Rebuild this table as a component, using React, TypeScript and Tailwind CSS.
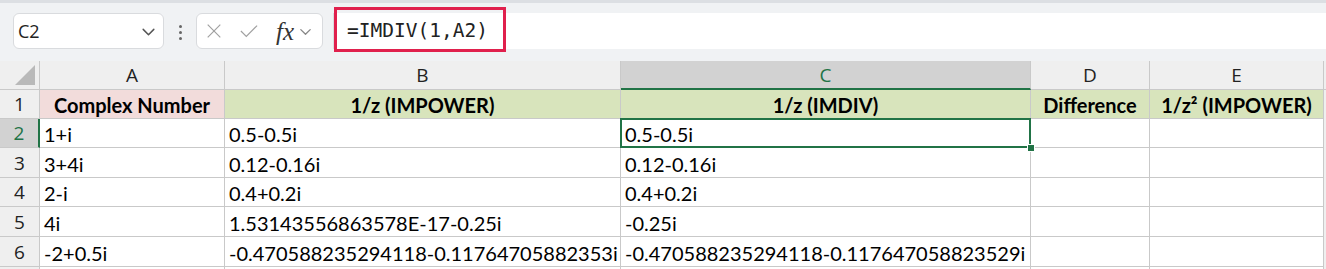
import React from "react";

// Column widths in px: row header, A, B, C, D, E, and the sliver past E
const COLS = "40px 185px 396px 410px 119px 174px 2px";
// Row heights: column header, row 1..6, and the partial row at the bottom
const ROWS = "29px 29px 29px 30px 29px 30px 30px 10px";

const CELL_FONT = "font-['Lato',sans-serif]";
const UI_FONT = "font-['Open_Sans',sans-serif]";

type Row = { n: number; a: string; b: string; c: string };

const rows: Row[] = [
  { n: 2, a: "1+i", b: "0.5-0.5i", c: "0.5-0.5i" },
  { n: 3, a: "3+4i", b: "0.12-0.16i", c: "0.12-0.16i" },
  { n: 4, a: "2-i", b: "0.4+0.2i", c: "0.4+0.2i" },
  { n: 5, a: "4i", b: "1.53143556863578E-17-0.25i", c: "-0.25i" },
  {
    n: 6,
    a: "-2+0.5i",
    b: "-0.470588235294118-0.11764705882353i",
    c: "-0.470588235294118-0.117647058823529i",
  },
];

function Chevron({ className }: { className?: string }) {
  return (
    <svg viewBox="0 0 16 16" className={className} fill="none" stroke="currentColor" strokeWidth="1.4">
      <path d="M3 6l5 5 5-5" strokeLinecap="round" strokeLinejoin="round" />
    </svg>
  );
}

function FormulaBar() {
  return (
    <div className="relative flex h-[61px] items-start bg-[#f0f2f4] border-t-[3px] border-[#dcdfe3]">
      {/* Name box */}
      <div className="ml-[13px] mt-[10px] flex h-[36px] w-[151px] items-center justify-between rounded-[6px] border border-[#d9dbde] bg-white pl-[4px] pr-[6px]">
        <span className={`${UI_FONT} text-[18px] text-[#222]`}>C2</span>
        <Chevron className="h-[17px] w-[17px] text-[#555]" />
      </div>
      {/* Vertical dots */}
      <div className="ml-[13px] mt-[22px] flex w-[6px] flex-col items-center gap-[3px]">
        <div className="h-[3px] w-[3px] rounded-full bg-[#666]" />
        <div className="h-[3px] w-[3px] rounded-full bg-[#666]" />
        <div className="h-[3px] w-[3px] rounded-full bg-[#666]" />
      </div>
      {/* Cancel / enter / fx */}
      <div className="ml-[13px] mt-[10px] flex h-[36px] w-[127px] items-center rounded-[6px] border border-[#d9dbde] bg-white">
        <svg viewBox="0 0 20 20" className="ml-[8px] h-[18px] w-[18px] text-[#a0a0a0]" fill="none" stroke="currentColor" strokeWidth="1.3">
          <path d="M3 3l14 14M17 3L3 17" />
        </svg>
        <svg viewBox="0 0 22 20" className="ml-[15px] h-[18px] w-[22px] text-[#a0a0a0]" fill="none" stroke="currentColor" strokeWidth="1.3">
          <path d="M2 10l6 6L20 4" />
        </svg>
        <span className="ml-[16px] font-['Liberation_Serif',serif] text-[25px] italic leading-none text-[#333]">fx</span>
        <Chevron className="ml-[4px] h-[15px] w-[15px] text-[#888]" />
      </div>
      {/* Formula input */}
      <div className="ml-[10px] mt-[10px] flex h-[36px] flex-1 items-center border-l border-[#d9dbde] bg-white pl-[13px]">
        <span className="font-['DejaVu_Sans_Mono',monospace] text-[19.5px] text-[#222]">=IMDIV(1,A2)</span>
      </div>
      <div className="absolute left-[334px] top-[4px] h-[45px] w-[172px] border-[3px] border-[#e0204d]" />
    </div>
  );
}

function ColHeader({ label, active }: { label: string; active?: boolean }) {
  return (
    <div
      className={`flex items-center justify-center border-r border-[#c9c9c9] ${UI_FONT} text-[19px] leading-[24px] ${
        active ? "bg-[#d2d2d2] text-[#217346] border-b-2 border-b-[#217346]" : "bg-[#efefef] text-[#222] border-b border-b-[#c9c9c9]"
      }`}
    >
      {label}
    </div>
  );
}

function RowHeader({ n, active }: { n: number; active?: boolean }) {
  return (
    <div
      className={`flex items-center justify-center border-b border-[#c9c9c9] ${UI_FONT} text-[19px] leading-[24px] ${
        active ? "bg-[#d2d2d2] text-[#217346] border-r-2 border-r-[#217346]" : "bg-[#efefef] text-[#222] border-r border-r-[#c9c9c9]"
      }`}
    >
      {n}
    </div>
  );
}

function Cell({ children, className = "" }: { children?: React.ReactNode; className?: string }) {
  return (
    <div
      className={`flex items-center overflow-hidden whitespace-nowrap border-r border-b border-[#c9c9c9] pl-[4px] pt-[2px] ${CELL_FONT} text-[20px] leading-[24px] text-black ${className}`}
    >
      {children}
    </div>
  );
}

function HeadCell({ children, bg }: { children: React.ReactNode; bg: string }) {
  return (
    <div
      className={`flex items-center justify-center overflow-hidden whitespace-nowrap border-r border-b border-[#c9c9c9] pt-[2px] ${CELL_FONT} text-[20px] leading-[24px] font-bold text-black ${bg}`}
    >
      {children}
    </div>
  );
}

export default function App() {
  return (
    <div className="h-[269px] w-[1326px] overflow-hidden bg-white">
      <FormulaBar />
      <div className="grid" style={{ gridTemplateColumns: COLS, gridTemplateRows: ROWS }}>
        {/* Column header row */}
        <div className="relative border-r border-b border-[#c9c9c9] bg-[#efefef]">
          <svg viewBox="0 0 20 20" className="absolute bottom-[4px] right-[4px] h-[20px] w-[20px]">
            <path d="M20 0L20 20L0 20Z" fill="#b9b9b9" />
          </svg>
        </div>
        <ColHeader label="A" />
        <ColHeader label="B" />
        <ColHeader label="C" active />
        <ColHeader label="D" />
        <ColHeader label="E" />
        <div className="bg-[#efefef] border-b border-[#c9c9c9]" />

        {/* Row 1: headings */}
        <RowHeader n={1} />
        <HeadCell bg="bg-[#f2dcdb]">Complex Number</HeadCell>
        <HeadCell bg="bg-[#d8e4bc]">1/z (IMPOWER)</HeadCell>
        <HeadCell bg="bg-[#d8e4bc]">1/z (IMDIV)</HeadCell>
        <HeadCell bg="bg-[#d8e4bc]">Difference</HeadCell>
        <HeadCell bg="bg-[#d8e4bc]">1/z² (IMPOWER)</HeadCell>
        <div className="bg-[#efefef]" />

        {rows.map((r) => (
          <React.Fragment key={r.n}>
            <RowHeader n={r.n} active={r.n === 2} />
            <Cell>{r.a}</Cell>
            <Cell>{r.b}</Cell>
            {r.n === 2 ? (
              <div className="relative flex">
                <Cell className="flex-1">{r.c}</Cell>
                <div className="pointer-events-none absolute -left-[1px] -top-[1px] bottom-0 right-0 border-2 border-[#217346]" />
                <div className="absolute -bottom-[4px] -right-[4px] h-[8px] w-[8px] border border-white bg-[#217346]" />
              </div>
            ) : (
              <Cell>{r.c}</Cell>
            )}
            <Cell />
            <Cell />
            <div className="bg-[#efefef]" />
          </React.Fragment>
        ))}

        {/* partial row at the bottom */}
        <div className="border-r border-[#c9c9c9] bg-[#efefef]" />
        <div className="border-r border-[#c9c9c9]" />
        <div className="border-r border-[#c9c9c9]" />
        <div className="border-r border-[#c9c9c9]" />
        <div className="border-r border-[#c9c9c9]" />
        <div className="border-r border-[#c9c9c9]" />
        <div className="bg-[#efefef]" />
      </div>
    </div>
  );
}
